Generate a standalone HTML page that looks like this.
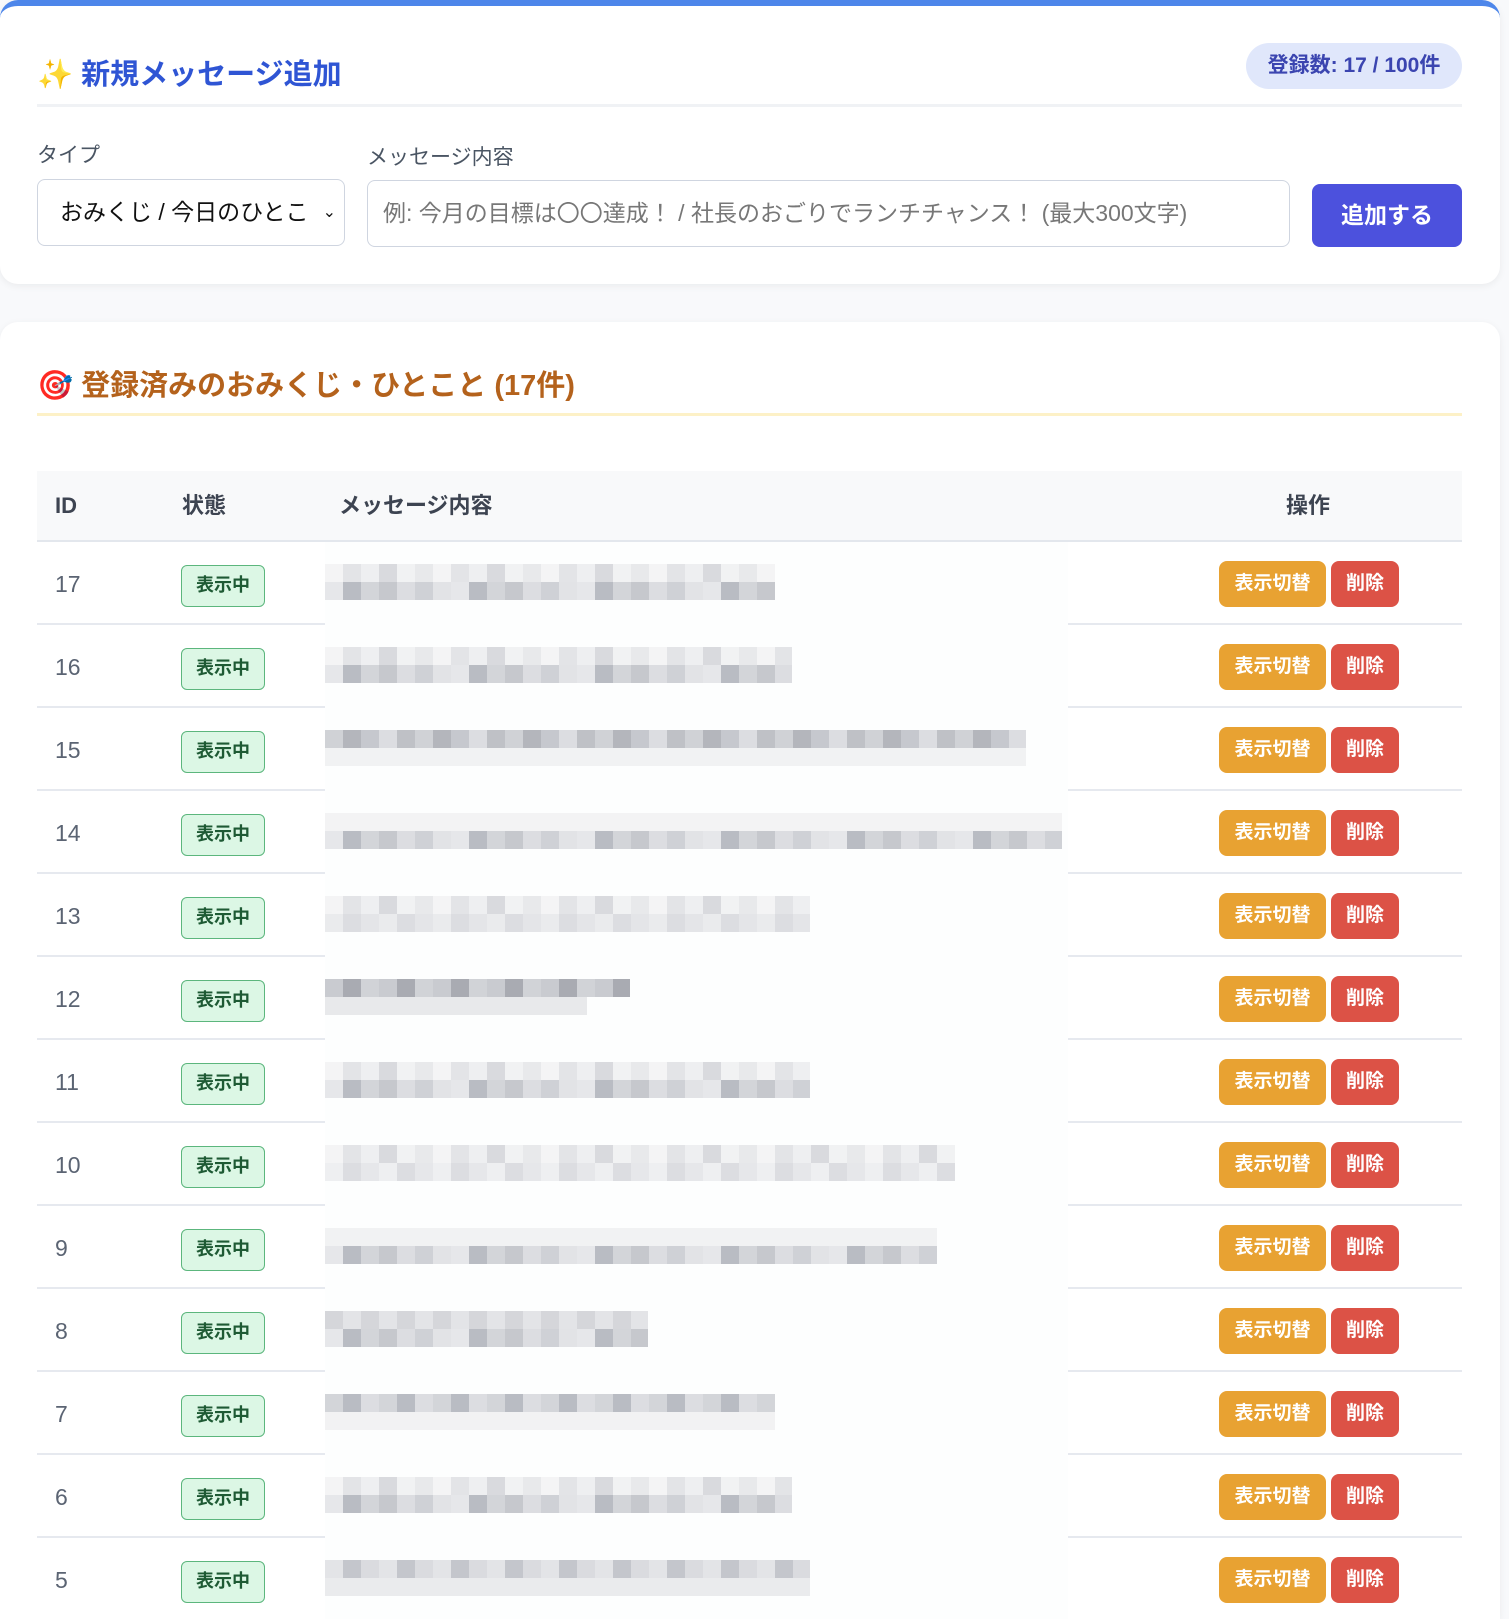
<!DOCTYPE html>
<html><head><meta charset="utf-8"><style>
*{box-sizing:border-box;margin:0;padding:0}
html,body{width:1509px;height:1619px;overflow:hidden}
body{background:#f8f9fb;font-family:"Liberation Sans","Noto Sans CJK JP",sans-serif;position:relative}
.card{position:absolute;left:0;width:1500px;background:#fff;border-radius:18px;box-shadow:0 2px 8px rgba(0,0,0,.06)}
.a{position:absolute}
.lbl{font-size:21px;color:#4a5563}
.row{position:absolute;left:37px;width:1425px;height:83px;border-bottom:2px solid #e6e9ef}
.id{position:absolute;left:18px;top:27px;font-size:23px;line-height:30px;color:#5b6473}
.st{position:absolute;left:144px;top:23px;width:84px;height:42px;background:#dcf7e5;border:1.5px solid #5cb67d;border-radius:6px;color:#1e5a34;font-weight:bold;font-size:18px;text-align:center;line-height:39px}
.b1{position:absolute;left:1182px;top:19px;width:107px;height:46px;background:#e8a232;border-radius:8px;color:#fff;font-weight:bold;font-size:19px;text-align:center;line-height:46px}
.b2{position:absolute;left:1294px;top:19px;width:68px;height:46px;background:#dc5246;border-radius:8px;color:#fff;font-weight:bold;font-size:19px;text-align:center;line-height:46px}
.bl{position:absolute;left:288px;top:0;width:743px;height:83px;background:#fdfefe}
.s1,.s2{position:absolute;left:0;height:18px}
.s1{top:22px;background:repeating-linear-gradient(90deg,#f4f4f5 0 18px,#e3e4e7 18px 36px,#eeeff1 36px 54px,#d9dade 54px 72px,#f1f2f3 72px 90px,#e8e9eb 90px 108px)}
.s2{top:40px;background:repeating-linear-gradient(90deg,#e6e7ea 0 18px,#b9bcc3 18px 36px,#d3d5d9 36px 54px,#c6c8cd 54px 72px,#dcdde1 72px 90px,#cfd1d6 90px 108px,#e2e3e6 108px 126px)}
.hd{position:absolute;top:20px;line-height:30px}
</style></head><body>
<div class="card" style="top:0;height:284px;border-top:6px solid #4d86ea">
<div class="a" style="left:37px;top:45px;font-size:29px;font-weight:bold;color:#2f55d4">✨ 新規メッセージ追加</div>
<div class="a" style="left:1246px;top:37px;width:216px;height:46px;background:#e0e7fb;border-radius:23px;color:#3b45b0;font-weight:bold;font-size:21px;text-align:center;line-height:46px">登録数: 17 / 100件</div>
<div class="a" style="left:37px;top:98px;width:1425px;height:3px;background:#f0f2f5"></div>
<div class="a lbl" style="left:37px;top:133px">タイプ</div>
<div class="a lbl" style="left:367px;top:135px">メッセージ内容</div>
<div class="a" style="left:37px;top:173px;width:308px;height:67px;border:1px solid #cfd5e0;border-radius:8px;font-size:23px;color:#111;line-height:65px;padding-left:22px;overflow:hidden;white-space:nowrap">おみくじ / 今日のひとこ<span style="position:absolute;right:8px;top:0;font-size:16px">⌄</span></div>
<div class="a" style="left:367px;top:174px;width:923px;height:67px;border:1px solid #cfd5e0;border-radius:8px;font-size:23px;color:#777;line-height:65px;padding-left:15px;white-space:nowrap;overflow:hidden">例: 今月の目標は〇〇達成！ / 社長のおごりでランチチャンス！ (最大300文字)</div>
<div class="a" style="left:1312px;top:178px;width:150px;height:63px;background:#4c51dd;border-radius:8px;color:#fff;font-weight:bold;font-size:23px;text-align:center;line-height:63px">追加する</div>
</div>
<div class="card" style="top:322px;height:1297px;border-radius:18px 18px 0 0">
<div class="a" style="left:37px;top:40px;font-size:29px;font-weight:bold;color:#b4621c">🎯 登録済みのおみくじ・ひとこと (17件)</div>
<div class="a" style="left:37px;top:91px;width:1425px;height:3px;background:#fdf1c7"></div>
</div>
<div class="a" style="left:37px;top:471px;width:1425px;height:71px;background:#f8f9fa;border-bottom:2px solid #e3e7ed;font-weight:bold;font-size:22px;color:#3d4451">
<span class="hd" style="left:18px">ID</span><span class="hd" style="left:145px">状態</span><span class="hd" style="left:302px">メッセージ内容</span><span class="hd" style="left:1249px">操作</span></div>
<div class="row" style="top:542px"><div class="id">17</div><div class="st">表示中</div><div class="bl"><div class="s1" style="width:450px"></div><div class="s2" style="width:450px"></div></div><div class="b1">表示切替</div><div class="b2">削除</div></div>
<div class="row" style="top:625px"><div class="id">16</div><div class="st">表示中</div><div class="bl"><div class="s1" style="width:467px"></div><div class="s2" style="width:467px"></div></div><div class="b1">表示切替</div><div class="b2">削除</div></div>
<div class="row" style="top:708px"><div class="id">15</div><div class="st">表示中</div><div class="bl"><div class="s1" style="width:701px;background:repeating-linear-gradient(90deg,#d0d2d6 0 18px,#b4b6bc 18px 36px,#c6c8ce 36px 54px,#dcdde1 54px 72px,#bfc1c6 72px 90px)"></div><div class="s2" style="width:701px;background:#f1f2f3"></div></div><div class="b1">表示切替</div><div class="b2">削除</div></div>
<div class="row" style="top:791px"><div class="id">14</div><div class="st">表示中</div><div class="bl"><div class="s1" style="width:737px;background:#f3f3f4"></div><div class="s2" style="width:737px"></div></div><div class="b1">表示切替</div><div class="b2">削除</div></div>
<div class="row" style="top:874px"><div class="id">13</div><div class="st">表示中</div><div class="bl"><div class="s1" style="width:485px"></div><div class="s2" style="width:485px;background:repeating-linear-gradient(90deg,#eaebed 0 18px,#dcdde1 18px 36px,#e4e5e8 36px 54px)"></div></div><div class="b1">表示切替</div><div class="b2">削除</div></div>
<div class="row" style="top:957px"><div class="id">12</div><div class="st">表示中</div><div class="bl"><div class="s1" style="width:305px;background:repeating-linear-gradient(90deg,#c9cbd0 0 18px,#a9abb2 18px 36px,#d1d3d7 36px 54px)"></div><div class="s2" style="width:262px;background:#e8e9eb"></div></div><div class="b1">表示切替</div><div class="b2">削除</div></div>
<div class="row" style="top:1040px"><div class="id">11</div><div class="st">表示中</div><div class="bl"><div class="s1" style="width:485px"></div><div class="s2" style="width:485px"></div></div><div class="b1">表示切替</div><div class="b2">削除</div></div>
<div class="row" style="top:1123px"><div class="id">10</div><div class="st">表示中</div><div class="bl"><div class="s1" style="width:630px"></div><div class="s2" style="width:630px;background:repeating-linear-gradient(90deg,#eeeff1 0 18px,#dcdde1 18px 36px,#e6e7ea 36px 54px)"></div></div><div class="b1">表示切替</div><div class="b2">削除</div></div>
<div class="row" style="top:1206px"><div class="id">9</div><div class="st">表示中</div><div class="bl"><div class="s1" style="width:612px;background:#f1f2f3"></div><div class="s2" style="width:612px"></div></div><div class="b1">表示切替</div><div class="b2">削除</div></div>
<div class="row" style="top:1289px"><div class="id">8</div><div class="st">表示中</div><div class="bl"><div class="s1" style="width:323px;background:repeating-linear-gradient(90deg,#d5d6da 0 18px,#e3e4e7 18px 36px)"></div><div class="s2" style="width:323px"></div></div><div class="b1">表示切替</div><div class="b2">削除</div></div>
<div class="row" style="top:1372px"><div class="id">7</div><div class="st">表示中</div><div class="bl"><div class="s1" style="width:450px;background:repeating-linear-gradient(90deg,#d3d5d9 0 18px,#b9bcc3 18px 36px,#dcdde1 36px 54px)"></div><div class="s2" style="width:450px;background:#f2f2f3"></div></div><div class="b1">表示切替</div><div class="b2">削除</div></div>
<div class="row" style="top:1455px"><div class="id">6</div><div class="st">表示中</div><div class="bl"><div class="s1" style="width:467px"></div><div class="s2" style="width:467px"></div></div><div class="b1">表示切替</div><div class="b2">削除</div></div>
<div class="row" style="top:1538px;height:81px;border-bottom:none"><div class="id">5</div><div class="st">表示中</div><div class="bl" style="height:81px"><div class="s1" style="width:485px;background:repeating-linear-gradient(90deg,#e3e4e7 0 18px,#c4c6cc 18px 36px,#dadbdf 36px 54px)"></div><div class="s2" style="width:485px;background:#eaebed"></div></div><div class="b1">表示切替</div><div class="b2">削除</div></div>
</body></html>
